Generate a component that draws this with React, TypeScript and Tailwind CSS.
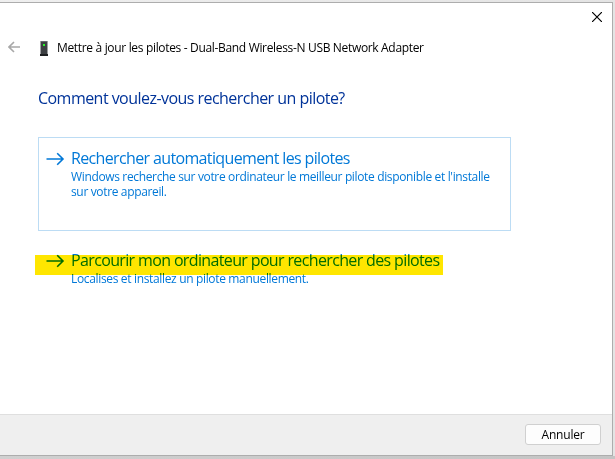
import React from 'react';

function Arrow() {
  return (
    <svg className="block shrink-0" width="19" height="14" viewBox="0 0 19 14" fill="none" stroke="currentColor" strokeWidth="1.6">
      <path d="M0.5 7H17M11.2 1.2L17 7L11.2 12.8" />
    </svg>
  );
}

function DeviceIcon() {
  return (
    <svg className="block shrink-0" width="8" height="15" viewBox="0 0 8 15">
      <path d="M0.5 0H7.5V13H0.5Z" fill="#3c3f42" />
      <path d="M0 13H8V15H0Z" fill="#1d1f21" />
      <path d="M1 0H7V1H1Z" fill="#66696c" />
      <path d="M3 3H5V5H3Z" fill="#2bf52b" />
    </svg>
  );
}

export default function App() {
  return (
    <div className="flex h-[459px] w-[615px] flex-col overflow-hidden bg-linear-to-r from-[#efefef] to-[#e4e4e4] font-['Open_Sans','Noto_Sans',sans-serif] whitespace-nowrap">
      <div className="mt-[2px] flex h-[454px] w-[613px] flex-col border-t border-r border-b border-[#adadad] bg-white">
        <div className="flex h-[28px] shrink-0 justify-end pt-[9px] pr-[10px] text-black">
          <svg width="10" height="10" viewBox="0 0 10 10" fill="none" stroke="currentColor" strokeWidth="1.2">
            <path d="M0 0L10 10M10 0L0 10" />
          </svg>
        </div>
        <header className="flex h-[34px] shrink-0 items-center pl-2">
          <svg className="-mt-[2px] shrink-0 text-[#a8a8a8]" width="12" height="12" viewBox="0 0 12 12" fill="none" stroke="currentColor" strokeWidth="1.6">
            <path d="M12 6H1M6 1L1 6L6 11" />
          </svg>
          <div className="ml-5"><DeviceIcon /></div>
          <span className="ml-[9px] text-[12px] tracking-[-0.33px] text-black">Mettre à jour les pilotes - Dual-Band Wireless-N USB Network Adapter</span>
        </header>
        <main className="flex flex-1 flex-col pl-[38px]">
          <h1 className="mt-[21px] text-[16px] leading-[24px] tracking-[-0.54px] text-[#003399]">Comment voulez-vous rechercher un pilote?</h1>
          <section className="mt-[27px] flex h-[94px] w-[473px] items-start border border-[#bcdcf4] pt-[11px] pl-[7px] text-[#0078d7]">
            <div className="mt-[3px]"><Arrow /></div>
            <div className="ml-[6px]">
              <h2 className="text-[16px] leading-[18px] tracking-[-0.64px]">Rechercher automatiquement les pilotes</h2>
              <p className="mt-[2px] text-[12px] leading-[15px] tracking-[-0.35px]">Windows recherche sur votre ordinateur le meilleur pilote disponible et l'installe<br />sur votre appareil.</p>
            </div>
          </section>
          <section className="relative mt-[21px] flex h-[48px] w-[473px] items-start pl-[8px] text-[#0078d7]">
            <div className="mt-[2px]"><Arrow /></div>
            <div className="-mt-px ml-[6px]">
              <h2 className="text-[16px] leading-[18px] tracking-[-0.64px]">Parcourir mon ordinateur pour rechercher des pilotes</h2>
              <p className="mt-[2px] text-[12px] leading-[15px] tracking-[-0.34px]">Localises et installez un pilote manuellement.</p>
            </div>
            <div className="absolute top-[3px] -left-[3px] h-[20px] w-[408px] bg-[#ffe600] mix-blend-multiply" />
          </section>
        </main>
        <footer className="flex h-[41px] shrink-0 justify-end border-t border-[#dfdfdf] bg-[#efefef] pt-[9px] pr-[11px]">
          <button className="h-[21px] w-[76px] rounded-[3px] border border-[#d0d0d0] bg-[#fdfdfd] text-[12px] leading-[19px] tracking-[-0.2px] text-black">Annuler</button>
        </footer>
      </div>
      <div className="h-[3px] shrink-0 bg-linear-to-r from-[#d0d0d0] to-[#c4c4c4]" />
    </div>
  );
}
